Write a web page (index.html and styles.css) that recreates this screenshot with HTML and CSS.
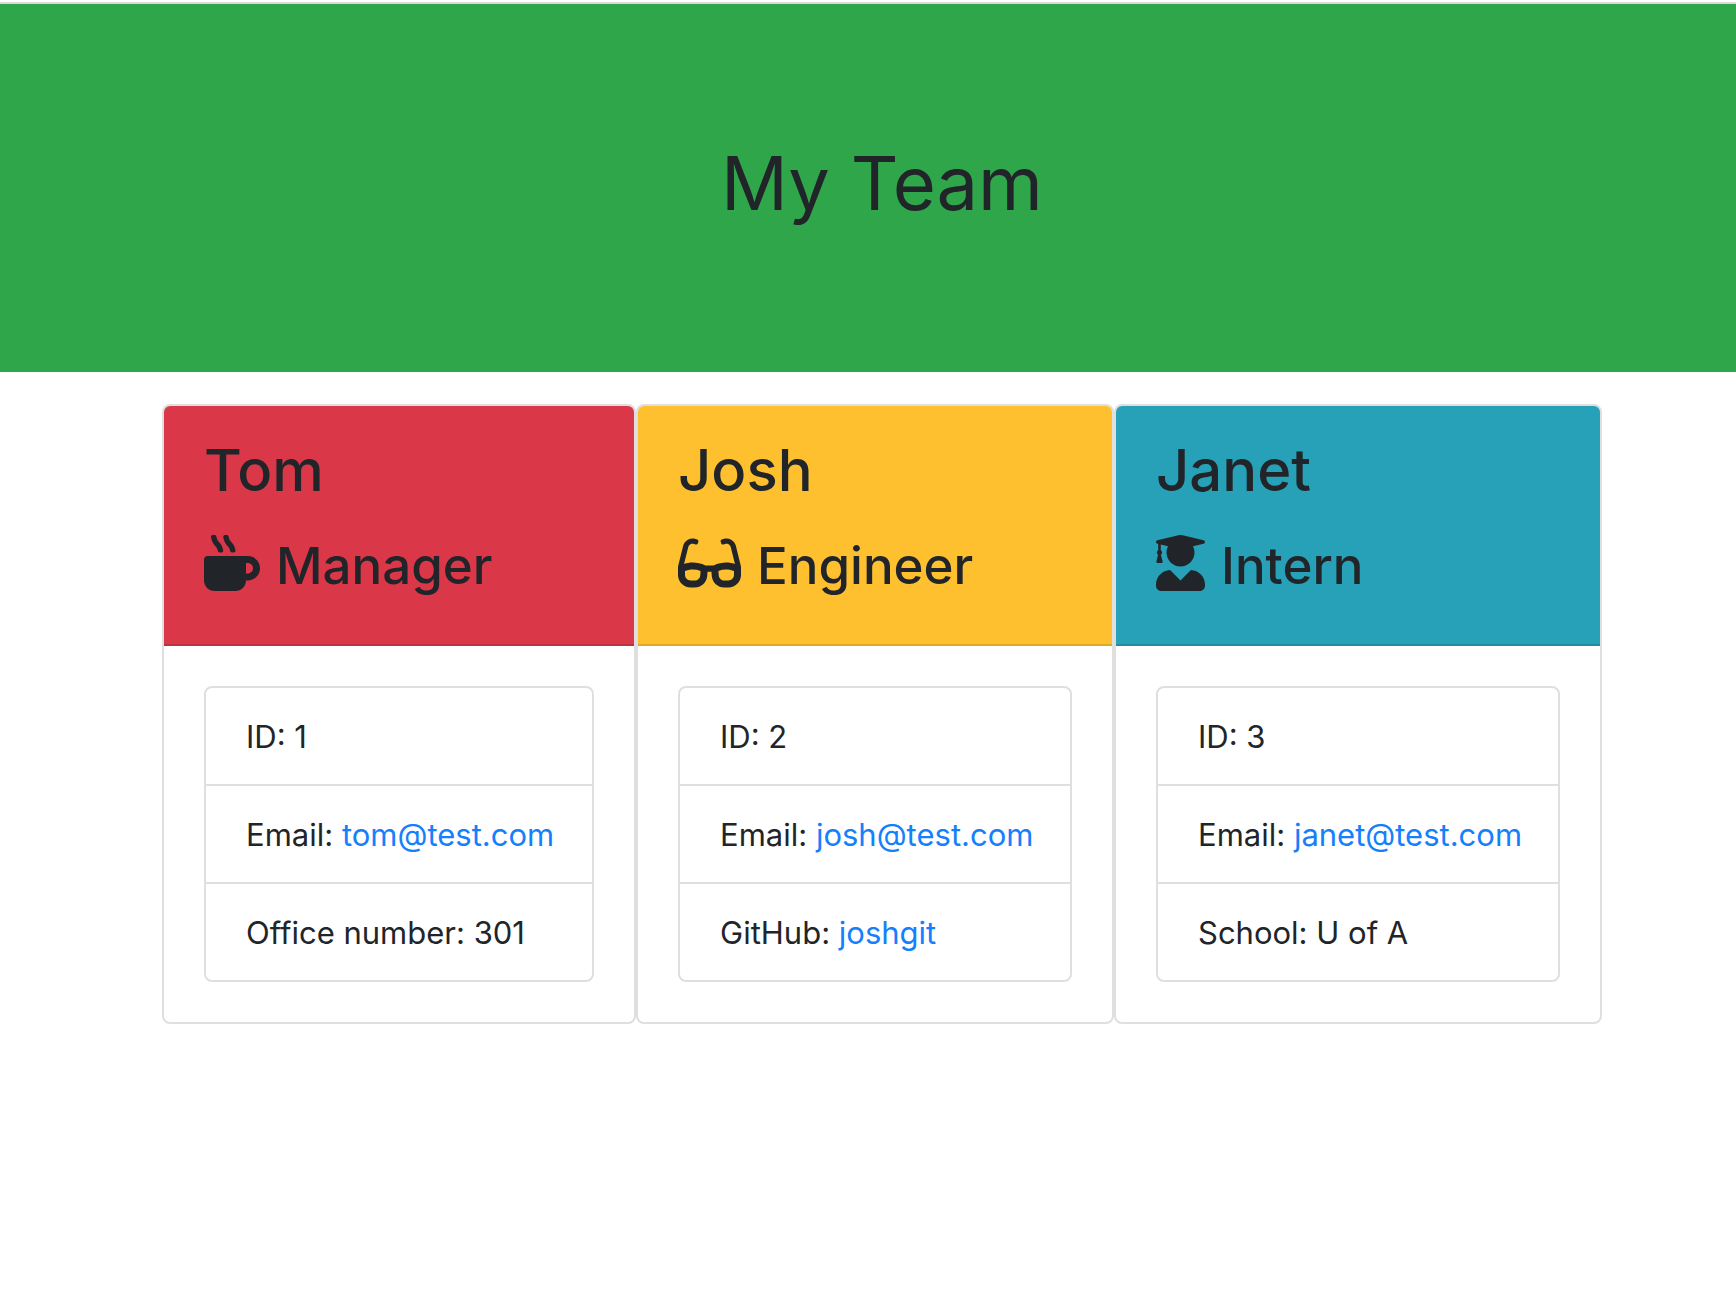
FILE: index.html
```html
<!DOCTYPE html>
<html lang="en">
<head>
  <meta charset="utf-8">
  <title>My Team</title>
  <link rel="stylesheet" href="styles.css">
</head>
<body>
  <header class="banner">
    <h1 class="banner-title">My Team</h1>
  </header>
  <main class="page">
    <div class="team">
      <section class="card">
        <div class="card-header card-header-manager">
          <h2 class="name">Tom</h2>
          <h3 class="role"><svg class="icon" viewBox="0 0 512 512" aria-hidden="true"><path d="M127.1 146.5c1.3 7.7 8 13.5 16 13.5h16.5c9.8 0 17.6-8.5 16.3-18-3.8-28.2-16.4-54.2-36.6-74.7-14.4-14.7-23.6-33.3-26.4-53.5C111.8 5.9 105 0 96.8 0H80.4C70.6 0 63 8.5 64.1 18c3.9 31.9 18 61.3 40.6 84.4 12 12.2 19.7 27.5 22.4 44.1zm112 0c1.3 7.7 8 13.5 16 13.5h16.5c9.8 0 17.6-8.5 16.3-18-3.8-28.2-16.4-54.2-36.6-74.7-14.4-14.7-23.6-33.3-26.4-53.5C223.8 5.9 217 0 208.8 0h-16.4c-9.8 0-17.5 8.5-16.3 18 3.9 31.9 18 61.3 40.6 84.4 12 12.2 19.7 27.5 22.4 44.1zM400 192H32c-17.7 0-32 14.3-32 32v192c0 53 43 96 96 96h192c53 0 96-43 96-96h16c61.8 0 112-50.2 112-112s-50.2-112-112-112zm0 160h-16v-96h16c26.5 0 48 21.5 48 48s-21.5 48-48 48z"/></svg>Manager</h3>
        </div>
        <div class="card-body">
          <ul class="details">
            <li class="detail">ID: 1</li>
            <li class="detail">Email: <a class="link" href="mailto:tom@test.com">tom@test.com</a></li>
            <li class="detail">Office number: 301</li>
          </ul>
        </div>
      </section>
      <section class="card">
        <div class="card-header card-header-engineer">
          <h2 class="name">Josh</h2>
          <h3 class="role"><svg class="icon" viewBox="0 0 576 512" aria-hidden="true"><path d="M574.1 280.37L528.75 98.66c-5.91-23.7-21.59-44.05-43-55.81-21.44-11.73-46.97-14.11-70.19-6.33l-15.25 5.08c-8.39 2.79-12.92 11.86-10.12 20.24l5.06 15.18c2.79 8.38 11.85 12.91 20.23 10.12l13.18-4.39c10.87-3.62 23-3.57 33.16 1.73 10.29 5.37 17.57 14.56 20.37 25.82l38.46 153.82c-22.19-6.81-49.79-12.46-81.2-12.46-34.77 0-73.98 7.02-114.85 26.74h-73.18c-40.87-19.74-80.08-26.75-114.86-26.75-31.42 0-59.02 5.65-81.21 12.46l38.46-153.83c2.79-11.25 10.09-20.45 20.38-25.81 10.16-5.3 22.28-5.35 33.15-1.73l13.17 4.39c8.38 2.79 17.44-1.74 20.23-10.12l5.06-15.18c2.8-8.38-1.73-17.45-10.12-20.24l-15.25-5.08c-23.22-7.78-48.75-5.41-70.19 6.33-21.41 11.77-37.09 32.11-43 55.8L1.9 280.37A64.218 64.218 0 0 0 0 295.86v70.25C0 429.01 51.58 480 115.2 480h37.12c60.28 0 110.37-45.94 114.88-105.37l2.93-38.63h35.75l2.93 38.63C313.31 434.06 363.4 480 423.68 480h37.12c63.62 0 115.2-50.99 115.2-113.88v-70.25c0-5.23-.64-10.43-1.9-15.5zm-370.72 89.42c-1.97 25.91-24.4 46.21-51.06 46.21H115.2C86.97 416 64 393.62 64 366.11v-37.54c18.12-6.49 43.42-12.92 72.58-12.92 23.86 0 47.26 4.33 69.93 12.92l-3.13 41.22zM512 366.12c0 27.51-22.97 49.88-51.2 49.88h-37.12c-26.67 0-49.1-20.3-51.06-46.21l-3.13-41.22c22.67-8.59 46.08-12.92 69.95-12.92 29.12 0 54.43 6.44 72.55 12.93v37.54z"/></svg>Engineer</h3>
        </div>
        <div class="card-body">
          <ul class="details">
            <li class="detail">ID: 2</li>
            <li class="detail">Email: <a class="link" href="mailto:josh@test.com">josh@test.com</a></li>
            <li class="detail">GitHub: <a class="link" href="https://github.com/joshgit">joshgit</a></li>
          </ul>
        </div>
      </section>
      <section class="card">
        <div class="card-header card-header-intern">
          <h2 class="name">Janet</h2>
          <h3 class="role"><svg class="icon" viewBox="0 0 448 512" aria-hidden="true"><path d="M319.4 320.6L224 416l-95.4-95.4C57.1 323.7 0 382.2 0 454.4v9.6c0 26.5 21.5 48 48 48h352c26.5 0 48-21.5 48-48v-9.6c0-72.2-57.1-130.7-128.6-133.8zM13.6 79.8l6.4 1.5v58.4c-7 4.2-12 11.5-12 20.3 0 8.4 4.6 15.4 11.1 19.7L3.5 242c-1.7 6.9 2.1 14 7.6 14h41.8c5.5 0 9.3-7.1 7.6-14l-15.6-62.3C51.4 175.4 56 168.4 56 160c0-8.8-5-16.1-12-20.3V87.1l66 15.9c-8.6 17.2-14 36.4-14 57 0 70.7 57.3 128 128 128s128-57.3 128-128c0-20.6-5.3-39.8-14-57l96.3-23.2c18.2-4.4 18.2-27.1 0-31.5l-190.4-46c-13-3.1-26.7-3.1-39.7 0L13.6 48.2c-18.1 4.4-18.1 27.2 0 31.6z"/></svg>Intern</h3>
        </div>
        <div class="card-body">
          <ul class="details">
            <li class="detail">ID: 3</li>
            <li class="detail">Email: <a class="link" href="mailto:janet@test.com">janet@test.com</a></li>
            <li class="detail">School: U of A</li>
          </ul>
        </div>
      </section>
    </div>
  </main>
</body>
</html>
```
FILE: styles.css
```css
* {
  box-sizing: border-box;
}

body {
  margin: 0;
  padding-top: 2px;
  background: #fff;
  color: #212529;
  font-family: Inter, "Liberation Sans", sans-serif;
  font-size: 31px;
  line-height: 48px;
}

h1, h2, h3 {
  margin: 0 0 16px;
  font-weight: 500;
}

.banner {
  padding: 131px 0 125px 28px;
  border-top: 2px solid #dadada;
  background: #30a64a;
  text-align: center;
}

.banner-title {
  font-size: 74px;
  font-weight: 400;
  line-height: 96px;
}

.page {
  padding: 32px 0 32px 28px;
}

.team {
  display: grid;
  grid-template-columns: 474fr 478fr 488fr;
  max-width: 1440px;
  margin: 0 auto;
}

.card {
  border: 2px solid #dfdfdf;
  border-radius: 8px;
  overflow: hidden;
}

.card-header {
  padding: 26px 40px 22px;
  border-bottom: 2px solid rgba(0, 0, 0, 0.125);
}

.card-header-manager {
  background-color: #da3848;
}

.card-header-engineer {
  background-color: #fec02f;
}

.card-header-intern {
  background-color: #26a1b8;
}

.name {
  font-size: 58px;
  line-height: 77px;
}

.role {
  font-size: 51px;
  line-height: 81px;
  white-space: nowrap;
}

.icon {
  height: 56px;
  margin-right: 16px;
  vertical-align: -7px;
  fill: currentColor;
}

.card-body {
  padding: 40px;
}

.details {
  margin: 0;
  padding: 0;
  border: 2px solid #dfdfdf;
  border-radius: 8px;
  list-style: none;
}

.detail {
  padding: 25px 0 23px 40px;
  white-space: nowrap;
}

.detail + .detail {
  border-top: 2px solid #dfdfdf;
}

.link {
  color: #167ffb;
  text-decoration: none;
}
```
